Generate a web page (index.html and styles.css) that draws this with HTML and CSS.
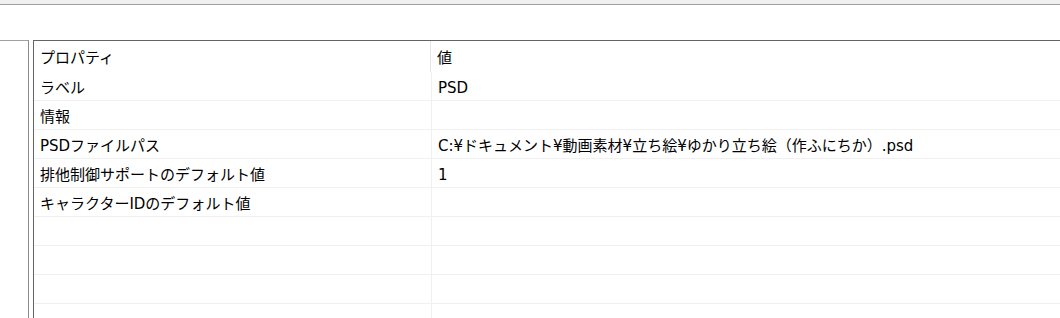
FILE: index.html
```html
<!DOCTYPE html>
<html lang="ja">

<head>
    <meta charset="UTF-8">
    <title>プロパティ</title>
    <link rel="stylesheet" href="styles.css">
</head>

<body>
    <div class="topbar"></div>
    <div class="toolbar"></div>

    <div class="main">
        <div class="side"></div>

        <div class="grid">
            <div class="head">
                <div class="cell name">プロパティ</div>
                <div class="cell value">値</div>
            </div>
            <div class="row">
                <div class="cell name">ラベル</div>
                <div class="cell value">PSD</div>
            </div>
            <div class="row">
                <div class="cell name">情報</div>
                <div class="cell value"></div>
            </div>
            <div class="row">
                <div class="cell name">PSDファイルパス</div>
                <div class="cell value">C:¥ドキュメント¥動画素材¥立ち絵¥ゆかり立ち絵（作ふにちか）.psd</div>
            </div>
            <div class="row">
                <div class="cell name">排他制御サポートのデフォルト値</div>
                <div class="cell value">1</div>
            </div>
            <div class="row">
                <div class="cell name">キャラクターIDのデフォルト値</div>
                <div class="cell value"></div>
            </div>
            <!-- empty rows -->
            <div class="row"><div class="cell name"></div><div class="cell value"></div></div>
            <div class="row"><div class="cell name"></div><div class="cell value"></div></div>
            <div class="row"><div class="cell name"></div><div class="cell value"></div></div>
            <div class="row"><div class="cell name"></div><div class="cell value"></div></div>
        </div>
    </div>
</body>

</html>
```

FILE: styles.css
```css
body {
    margin: 0;
    padding: 0;
    background-color: #ffffff;
    color: #000;
    font-family: "DejaVu Sans", "Noto Sans CJK JP", sans-serif;
    font-size: 15px;
    overflow: hidden;
    height: 318px;
}

.topbar {
    height: 4px;
    background-color: #f0f0f0;
    border-bottom: 1px solid #a0a0a0;
}

.toolbar {
    height: 35px;
    background-color: #fff;
}

.main {
    display: flex;
    gap: 4px;
    height: 278px;
}

.side {
    width: 29px;
    border-top: 1px solid #a0a0a0;
    border-right: 1px solid #8c8c8c;
    box-sizing: border-box;
}

.grid {
    flex: 1;
    border-top: 1px solid #646464;
    border-left: 1px solid #646464;
    overflow: hidden;
}

.head, .row {
    display: flex;
    white-space: nowrap;
}

.head {
    height: 31px;
    line-height: 31px;
}

.row {
    height: 28px;
    line-height: 28px;
    border-bottom: 1px solid #f0f0f0;
}

.cell {
    padding: 2px 0 0 6px;
    box-sizing: border-box;
}

.name {
    border-right: 1px solid #f0f0f0;
}

.head .name {
    width: 397px;
    border-right-color: #e5e5e5;
}

.row .name {
    width: 398px;
}

.value {
    flex: 1;
}
```
